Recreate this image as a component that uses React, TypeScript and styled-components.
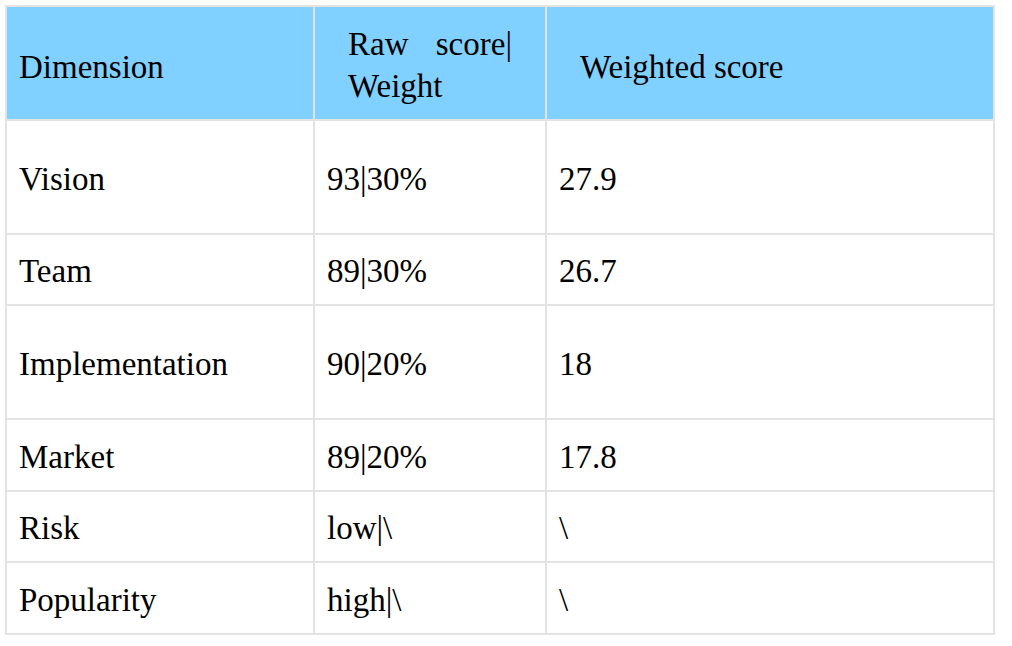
import React from "react";
import styled, { createGlobalStyle } from "styled-components";

const Global = createGlobalStyle`
  html, body { margin: 0; padding: 0; background: #ffffff; }
  body { font-family: "Liberation Serif", "Times New Roman", serif; }
`;

const Page = styled.div`
  padding: 5px;
`;

const Table = styled.div`
  display: grid;
  grid-template-columns: 306px 230px 446px;
  grid-template-rows: 112px 112px 69px 112px 70px 69px 70px;
  gap: 2px;
  padding: 2px;
  width: 990px;
  box-sizing: border-box;
  background: #e3e3e3;
`;

const Cell = styled.div`
  background: #ffffff;
  display: flex;
  align-items: center;
  padding: 4px 12px 0;
  font-size: 33px;
  line-height: 41px;
  color: #000000;
  box-sizing: border-box;
`;

const HeadCell = styled(Cell)<{ $indent?: boolean; $wrap?: boolean }>`
  background: #80d1ff;
  padding: ${(p) => (p.$wrap ? "4px 33px 0" : p.$indent ? "8px 33px 0" : "8px 12px 0")};
  line-height: ${(p) => (p.$wrap ? "42px" : "41px")};
  text-align: ${(p) => (p.$wrap ? "justify" : "left")};
`;

const rows: [string, string, string][] = [
  ["Vision", "93|30%", "27.9"],
  ["Team", "89|30%", "26.7"],
  ["Implementation", "90|20%", "18"],
  ["Market", "89|20%", "17.8"],
  ["Risk", "low|\\", "\\"],
  ["Popularity", "high|\\", "\\"],
];

export default function App() {
  return (
    <Page>
      <Global />
      <Table>
        <HeadCell>Dimension</HeadCell>
        <HeadCell $wrap>
          <div>Raw score| Weight</div>
        </HeadCell>
        <HeadCell $indent>Weighted score</HeadCell>
        {rows.map((r) => (
          <React.Fragment key={r[0]}>
            <Cell>{r[0]}</Cell>
            <Cell>{r[1]}</Cell>
            <Cell>{r[2]}</Cell>
          </React.Fragment>
        ))}
      </Table>
    </Page>
  );
}
